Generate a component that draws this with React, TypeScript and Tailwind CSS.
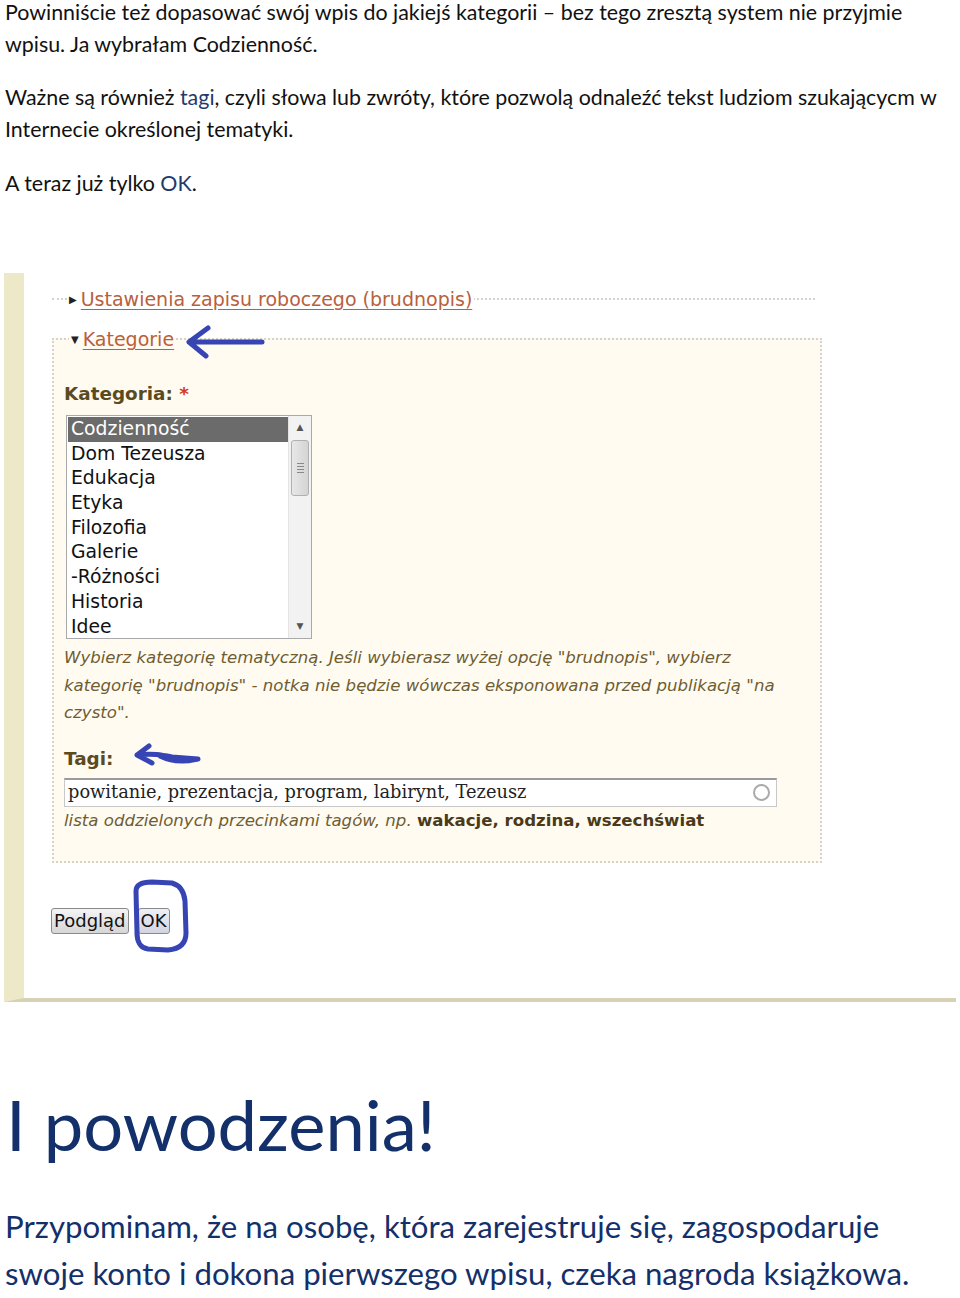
import React from 'react';

const categories = ['Codzienność', 'Dom Tezeusza', 'Edukacja', 'Etyka', 'Filozofia', 'Galerie', '-Różności', 'Historia', 'Idee'];

const BlueArrow: React.FC<{ className: string; d: string; w: number; h: number }> = ({ className, d, w, h }) => (
  <svg className={className} width={w} height={h} viewBox={`0 0 ${w} ${h}`} fill="none">
    <path d={d} stroke="#3744b4" strokeWidth={5} strokeLinecap="round" strokeLinejoin="round" />
  </svg>
);

const Listbox: React.FC = () => (
  <div className="flex w-[246px] h-[224px] border border-[#a9a9a9] bg-white">
    <ul className="flex-1 pt-[1px] pl-[1px]">
      {categories.map((c, i) => (
        <li
          key={c}
          className={`h-[24.7px] leading-[24.7px] pl-[3px] text-[18.8px] ${i === 0 ? 'bg-[#6b6b6b] text-white' : 'text-[#111]'}`}
        >
          {c}
        </li>
      ))}
    </ul>
    <div className="w-[23px] flex flex-col bg-[#f2f2f2] border-l border-[#e4e4e4]">
      <div className="h-[24px] flex items-center justify-center text-[9px] text-[#555]">▲</div>
      <div className="h-[56px] mx-[2px] rounded-[3px] border border-[#b0b0b0] bg-gradient-to-r from-[#e8e8e8] to-[#d4d4d4] flex flex-col items-center justify-center gap-[2px]">
        <span className="block w-[7px] h-[1px] bg-[#888]" />
        <span className="block w-[7px] h-[1px] bg-[#888]" />
        <span className="block w-[7px] h-[1px] bg-[#888]" />
        <span className="block w-[7px] h-[1px] bg-[#888]" />
      </div>
      <div className="flex-1" />
      <div className="h-[22px] flex items-center justify-center text-[9px] text-[#555]">▼</div>
    </div>
  </div>
);

const EditorShot: React.FC = () => (
  <div className="relative border-l-[20px] border-l-[#ece8c8] border-b-[4px] border-b-[#d8d2b4] bg-white pl-[28px] pt-[14px] pb-[64px] font-['DejaVu_Sans',sans-serif]">
    <fieldset className="w-[763px] border-t-2 border-dotted border-[#d6d3cc] pl-[10px]">
      <legend className="ml-[5px] px-[2px] h-[24px] leading-[24px] text-[19px] text-[#b8603c]">
        <span className="text-[10px] text-[#222] mr-[4px] align-[3px]">▶</span>
        <span className="underline underline-offset-[3px]">Ustawienia zapisu roboczego (brudnopis)</span>
      </legend>
    </fieldset>

    <fieldset className="mt-[16px] w-[770px] border-2 border-dotted border-[#d6d3cc] bg-[#fffbf1] pl-[10px] pb-[28px]">
      <legend className="ml-[5px] px-[2px] h-[24px] leading-[24px] text-[19px] text-[#b8603c]">
        <span className="text-[10px] text-[#222] mr-[4px] align-[3px]">▼</span>
        <span className="underline underline-offset-[3px]">Kategorie</span>
      </legend>

      <div className="pt-[31px] h-[24px] leading-[24px] box-content text-[18.4px] font-bold text-[#5c4a1f]">
        Kategoria: <span className="text-[#d23a2a]">*</span>
      </div>
      <div className="mt-[9px] ml-[2px]">
        <Listbox />
      </div>
      <p className="mt-[5px] whitespace-nowrap text-[16.6px] leading-[27.5px] italic text-[#6e5d33]">
        Wybierz kategorię tematyczną. Jeśli wybierasz wyżej opcję "brudnopis", wybierz
        <br />
        kategorię "brudnopis" - notka nie będzie wówczas eksponowana przed publikacją "na
        <br />
        czysto".
      </p>

      <div className="mt-[20px] h-[24px] leading-[24px] text-[18.4px] font-bold text-[#5c4a1f]">Tagi:</div>
      <div className="mt-[7px] w-[713px] h-[29px] flex items-center border border-[#c8c8c8] border-t-2 border-t-[#9a9a9a] bg-white pl-[3px] pr-[6px]">
        <span className="flex-1 font-['DejaVu_Serif',serif] text-[17.8px] text-[#222]">
          powitanie, prezentacja, program, labirynt, Tezeusz
        </span>
        <span className="block w-[17px] h-[17px] rounded-full border-2 border-[#aaa]" />
      </div>
      <p className="mt-[2px] h-[24px] leading-[24px] whitespace-nowrap text-[16.6px] text-[#6e5d33]">
        <span className="italic">lista oddzielonych przecinkami tagów, np. </span>
        <span className="font-bold text-[#4a3a17]">wakacje, rodzina, wszechświat</span>
      </p>
    </fieldset>

    <div className="mt-[45px] -ml-[1px] flex gap-[9px] text-[18px]">
      <button className="h-[26px] px-[2px] rounded-[3px] border border-[#8a8a8a] bg-gradient-to-b from-[#f4f4f4] to-[#d6d6d6] text-[#111] leading-[24px]">
        Podgląd
      </button>
      <button className="h-[26px] px-[2px] rounded-[3px] border border-[#8a8a8a] bg-gradient-to-b from-[#eef0f8] to-[#d2d4e0] text-[#111] leading-[24px]">
        OK
      </button>
    </div>

    <BlueArrow
      className="absolute left-[160px] top-[50px]"
      w={82}
      h={36}
      d="M5 19 L78 19 M5 19 L24 5 M5 19 L22 33"
    />
    <BlueArrow
      className="absolute left-[108px] top-[468px]"
      w={72}
      h={28}
      d="M5 14 C20 12 30 14 40 16 L66 18 M5 14 L17 5 M5 14 L20 22 M28 15 C40 21 54 21 66 18"
    />
    <BlueArrow
      className="absolute left-[104px] top-[604px]"
      w={64}
      h={80}
      d="M8 14 C8 8 14 5 24 5 L44 6 C51 8 56 14 57 24 L58 56 C58 66 52 72 40 73 L20 72 C12 71 9 64 9 56 L8 14"
    />
  </div>
);

export default function App() {
  return (
    <div className="w-[960px] h-[1298px] overflow-hidden bg-white px-[4px] font-['Lato',sans-serif] text-[#111]">
      <div className="pl-[1px] -mt-[4px] text-[21.4px] leading-[32px]">
        <p>
          Powinniście też dopasować swój wpis do jakiejś kategorii – bez tego zresztą system nie przyjmie wpisu. Ja wybrałam Codzienność.
        </p>
        <p className="mt-[21px]">
          Ważne są również <span className="text-[#1f3a6e]">tagi</span>, czyli słowa lub zwróty, które pozwolą odnaleźć tekst ludziom szukającycm w Internecie określonej tematyki.
        </p>
        <p className="mt-[22px]">
          A teraz już tylko <span className="text-[#1f3a6e]">OK</span>.
        </p>
      </div>

      <div className="mt-[74px] w-[952px]">
        <EditorShot />
      </div>

      <h1 className="mt-[74px] pl-[2px] text-[70.5px] leading-[96px] text-[#13306a]">I powodzenia!</h1>
      <p className="mt-[31px] pl-[1px] text-[31.2px] leading-[47px] text-[#13306a]">
        Przypominam, że na osobę, która zarejestruje się, zagospodaruje swoje konto i dokona pierwszego wpisu, czeka nagroda książkowa.
      </p>
    </div>
  );
}
